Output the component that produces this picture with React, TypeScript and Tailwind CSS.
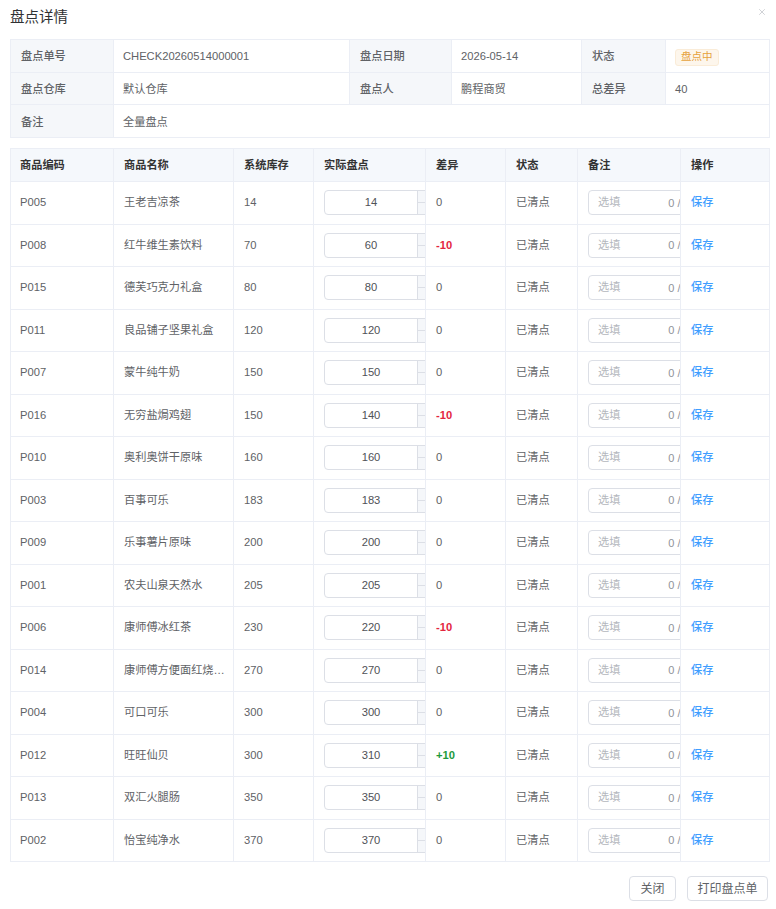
import { X } from "lucide-react";

interface Row {
  code: string;
  name: string;
  stock: number;
  actual: number;
}

const rows: Row[] = [
  { code: "P005", name: "王老吉凉茶", stock: 14, actual: 14 },
  { code: "P008", name: "红牛维生素饮料", stock: 70, actual: 60 },
  { code: "P015", name: "德芙巧克力礼盒", stock: 80, actual: 80 },
  { code: "P011", name: "良品铺子坚果礼盒", stock: 120, actual: 120 },
  { code: "P007", name: "蒙牛纯牛奶", stock: 150, actual: 150 },
  { code: "P016", name: "无穷盐焗鸡翅", stock: 150, actual: 140 },
  { code: "P010", name: "奥利奥饼干原味", stock: 160, actual: 160 },
  { code: "P003", name: "百事可乐", stock: 183, actual: 183 },
  { code: "P009", name: "乐事薯片原味", stock: 200, actual: 200 },
  { code: "P001", name: "农夫山泉天然水", stock: 205, actual: 205 },
  { code: "P006", name: "康师傅冰红茶", stock: 230, actual: 220 },
  { code: "P014", name: "康师傅方便面红烧牛肉", stock: 270, actual: 270 },
  { code: "P004", name: "可口可乐", stock: 300, actual: 300 },
  { code: "P012", name: "旺旺仙贝", stock: 300, actual: 310 },
  { code: "P013", name: "双汇火腿肠", stock: 350, actual: 350 },
  { code: "P002", name: "怡宝纯净水", stock: 370, actual: 370 },
];

const lbl = "bg-[#f5f7fa] border border-[#ebeef5] pl-[10px] pr-[8px] pt-[2px] text-[#606266] font-medium";
const val = "border border-[#ebeef5] pl-[9px] pr-[8px] pt-[2px] text-[#606266]";
const th = "border border-[#ebeef5] px-[10px] text-left font-semibold text-[#333] bg-[#f5f8fc]";
const td = "border border-[#ebeef5] px-[10px] text-[#606266] overflow-hidden whitespace-nowrap";
const fixedShadow = "relative z-10 shadow-[-8px_0_10px_-4px_rgba(0,0,0,0.14)]";

const Diff = ({ d }: { d: number }) => {
  if (d === 0) return <span>0</span>;
  if (d < 0) return <span className="font-bold text-[#e3263f]">{d}</span>;
  return <span className="font-bold text-[#1e9a3c]">+{d}</span>;
};

const NumberInput = ({ value }: { value: number }) => (
  <div className="relative w-[120px] h-[25px] border border-[#dcdfe6] rounded-[4px] bg-white">
    <div className="h-full pr-[26px] flex items-center justify-center text-[#505257]">{value}</div>
    <div className="absolute right-0 top-0 bottom-0 w-[26px] border-l border-[#dcdfe6] bg-[#f5f7fa] flex flex-col">
      <div className="flex-1 border-b border-[#dcdfe6]" />
      <div className="flex-1" />
    </div>
  </div>
);

const App = () => {
  return (
    <div className="relative w-[776px] h-[909px] bg-white font-['Liberation_Sans','Noto_Sans_CJK_SC',sans-serif] text-[11.2px]">
      <div className="h-[39px] pt-[8px] px-[10px] text-[14.5px] leading-[18px] text-[#303133]">盘点详情</div>
      <button className="absolute top-[7px] right-[9px] text-[#b4b7bd]" aria-label="关闭">
        <X size={10} strokeWidth={1.5} />
      </button>

      <div className="pl-[10px] w-[769px]">
        <table className="w-[759px] table-fixed border-collapse">
          <colgroup>
            <col className="w-[103px]" />
            <col className="w-[236px]" />
            <col className="w-[102px]" />
            <col className="w-[130px]" />
            <col className="w-[84px]" />
            <col className="w-[104px]" />
          </colgroup>
          <tbody>
            <tr className="h-[32.7px]">
              <td className={lbl}>盘点单号</td>
              <td className={val}>CHECK20260514000001</td>
              <td className={lbl}>盘点日期</td>
              <td className={val}>2026-05-14</td>
              <td className={lbl}>状态</td>
              <td className={val}>
                <span className="inline-flex items-center h-[17px] px-[5px] rounded-[3px] border border-[#faecd8] bg-[#fdf6ec] text-[#e6a23c] text-[10.5px]">
                  盘点中
                </span>
              </td>
            </tr>
            <tr className="h-[32.7px]">
              <td className={lbl}>盘点仓库</td>
              <td className={val}>默认仓库</td>
              <td className={lbl}>盘点人</td>
              <td className={val}>鹏程商贸</td>
              <td className={lbl}>总差异</td>
              <td className={val}>40</td>
            </tr>
            <tr className="h-[32.7px]">
              <td className={lbl}>备注</td>
              <td className={val} colSpan={5}>全量盘点</td>
            </tr>
          </tbody>
        </table>

        <table className="mt-[10px] w-[759px] table-fixed border-collapse">
          <colgroup>
            <col className="w-[103px]" />
            <col className="w-[120px]" />
            <col className="w-[80px]" />
            <col className="w-[112px]" />
            <col className="w-[80px]" />
            <col className="w-[72px]" />
            <col className="w-[103px]" />
            <col className="w-[89px]" />
          </colgroup>
          <thead>
            <tr className="h-[33px]">
              <th className={`${th} pl-[9px]`}>商品编码</th>
              <th className={th}>商品名称</th>
              <th className={th}>系统库存</th>
              <th className={th}>实际盘点</th>
              <th className={th}>差异</th>
              <th className={th}>状态</th>
              <th className={th}>备注</th>
              <th className={`${th} ${fixedShadow}`}>操作</th>
            </tr>
          </thead>
          <tbody>
            {rows.map((r) => (
              <tr key={r.code} className="h-[42.5px]">
                <td className={`${td} pl-[9px]`}>{r.code}</td>
                <td className={`${td} pr-[5px] text-ellipsis`}>{r.name}</td>
                <td className={td}>{r.stock}</td>
                <td className={`${td} pr-0`}>
                  <NumberInput value={r.actual} />
                </td>
                <td className={td}>
                  <Diff d={r.actual - r.stock} />
                </td>
                <td className={td}>已清点</td>
                <td className={`${td} pr-0`}>
                  <div className="w-[124px] h-[25px] border border-[#dcdfe6] rounded-[4px] flex items-center justify-between px-[9px]">
                    <span className="text-[#b4b7bd]">选填</span>
                    <span className="text-[#909399] text-[11px]">0 / 200</span>
                  </div>
                </td>
                <td className={`${td} ${fixedShadow} bg-white`}>
                  <span className="text-[#409eff] font-medium">保存</span>
                </td>
              </tr>
            ))}
          </tbody>
        </table>

        <div className="mt-[14px] flex justify-end gap-[11px] pr-[1px]">
          <button className="h-[25px] w-[47px] border border-[#dcdfe6] rounded-[4px] bg-white text-[#606266] text-[12px]">关闭</button>
          <button className="h-[25px] w-[81px] border border-[#dcdfe6] rounded-[4px] bg-white text-[#606266] text-[12px]">打印盘点单</button>
        </div>
      </div>
    </div>
  );
};

export default App;
